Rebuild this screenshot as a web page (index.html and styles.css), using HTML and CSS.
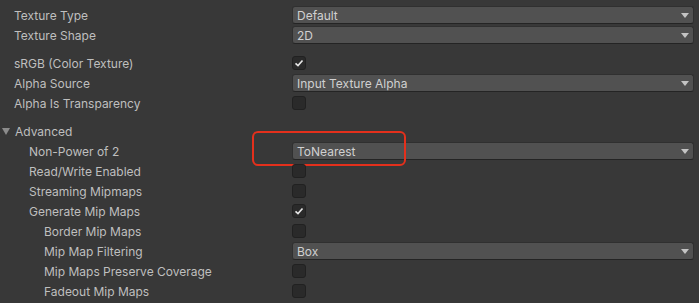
FILE: index.html
```html
<!DOCTYPE html>
<html lang="en">
<head>
    <meta charset="UTF-8">
    <title>Texture Import Settings</title>
    <link rel="stylesheet" href="styles.css">
</head>
<body>
    <div class="inspector">
        <div class="group">
            <div class="row">
                <div class="label">Texture Type</div>
                <div class="field"><div class="dropdown">Default<span class="arrow"></span></div></div>
            </div>
            <div class="row">
                <div class="label">Texture Shape</div>
                <div class="field"><div class="dropdown">2D<span class="arrow"></span></div></div>
            </div>
        </div>

        <div class="group">
            <div class="row">
                <div class="label">sRGB (Color Texture)</div>
                <div class="field"><div class="checkbox"><svg class="check" viewBox="0 0 12 12"><path d="M2.5 6.3 L5 8.6 L9.5 3.4"/></svg></div></div>
            </div>
            <div class="row">
                <div class="label">Alpha Source</div>
                <div class="field"><div class="dropdown">Input Texture Alpha<span class="arrow"></span></div></div>
            </div>
            <div class="row">
                <div class="label">Alpha Is Transparency</div>
                <div class="field"><div class="checkbox"></div></div>
            </div>
        </div>

        <div class="group">
            <div class="row">
                <div class="label foldout"><span class="fold-arrow"></span>Advanced</div>
            </div>
            <div class="row">
                <div class="label indent-1">Non-Power of 2</div>
                <div class="field"><div class="dropdown">ToNearest<span class="arrow"></span></div></div>
                <div class="highlight"></div>
            </div>
            <div class="row">
                <div class="label indent-1">Read/Write Enabled</div>
                <div class="field"><div class="checkbox"></div></div>
            </div>
            <div class="row">
                <div class="label indent-1">Streaming Mipmaps</div>
                <div class="field"><div class="checkbox"></div></div>
            </div>
            <div class="row">
                <div class="label indent-1">Generate Mip Maps</div>
                <div class="field"><div class="checkbox"><svg class="check" viewBox="0 0 12 12"><path d="M2.5 6.3 L5 8.6 L9.5 3.4"/></svg></div></div>
            </div>
            <div class="row">
                <div class="label indent-2">Border Mip Maps</div>
                <div class="field"><div class="checkbox"></div></div>
            </div>
            <div class="row">
                <div class="label indent-2">Mip Map Filtering</div>
                <div class="field"><div class="dropdown">Box<span class="arrow"></span></div></div>
            </div>
            <div class="row">
                <div class="label indent-2">Mip Maps Preserve Coverage</div>
                <div class="field"><div class="checkbox"></div></div>
            </div>
            <div class="row">
                <div class="label indent-2">Fadeout Mip Maps</div>
                <div class="field"><div class="checkbox"></div></div>
            </div>
        </div>
    </div>
</body>
</html>
```

FILE: styles.css
```css
* {
    box-sizing: border-box;
}
body {
    margin: 0;
    background: #383838;
    font-family: Inter, "Noto Sans", sans-serif;
    font-size: 12px;
    color: #bfbfbf;
}
.inspector {
    padding-top: 5px;
    display: flex;
    flex-direction: column;
    gap: 8px;
}
.row {
    display: flex;
    align-items: center;
    height: 20px;
    position: relative;
}
.label {
    width: 292px;
    flex-shrink: 0;
    padding-left: 14px;
    white-space: nowrap;
}
.label.indent-1 {
    padding-left: 29px;
}
.label.indent-2 {
    padding-left: 44px;
}
.label.foldout {
    padding-left: 2px;
    display: flex;
    align-items: center;
}
.fold-arrow {
    width: 0;
    height: 0;
    border-left: 4px solid transparent;
    border-right: 4px solid transparent;
    border-top: 7px solid #8c8c8c;
    margin-right: 5px;
}
.field {
    flex: 1;
    margin-right: 5px;
    display: flex;
    align-items: center;
}
.dropdown {
    width: 100%;
    height: 18px;
    background: #515151;
    border: 1px solid #303030;
    border-bottom-color: #242424;
    border-radius: 3px;
    color: #d0d0d0;
    padding-left: 4px;
    display: flex;
    align-items: center;
    justify-content: space-between;
}
.arrow {
    width: 0;
    height: 0;
    border-left: 4px solid transparent;
    border-right: 4px solid transparent;
    border-top: 5px solid #c4c4c4;
    margin-right: 4px;
}
.checkbox {
    width: 14px;
    height: 14px;
    background: #2a2a2a;
    border: 1px solid #212121;
    border-radius: 3px;
    display: flex;
}
.check {
    width: 12px;
    height: 12px;
    fill: none;
    stroke: #e6e6e6;
    stroke-width: 1.6;
}
.highlight {
    position: absolute;
    left: 252px;
    top: -10px;
    width: 154px;
    height: 35px;
    border: 2px solid #e4301c;
    border-radius: 6px;
    pointer-events: none;
}
```
